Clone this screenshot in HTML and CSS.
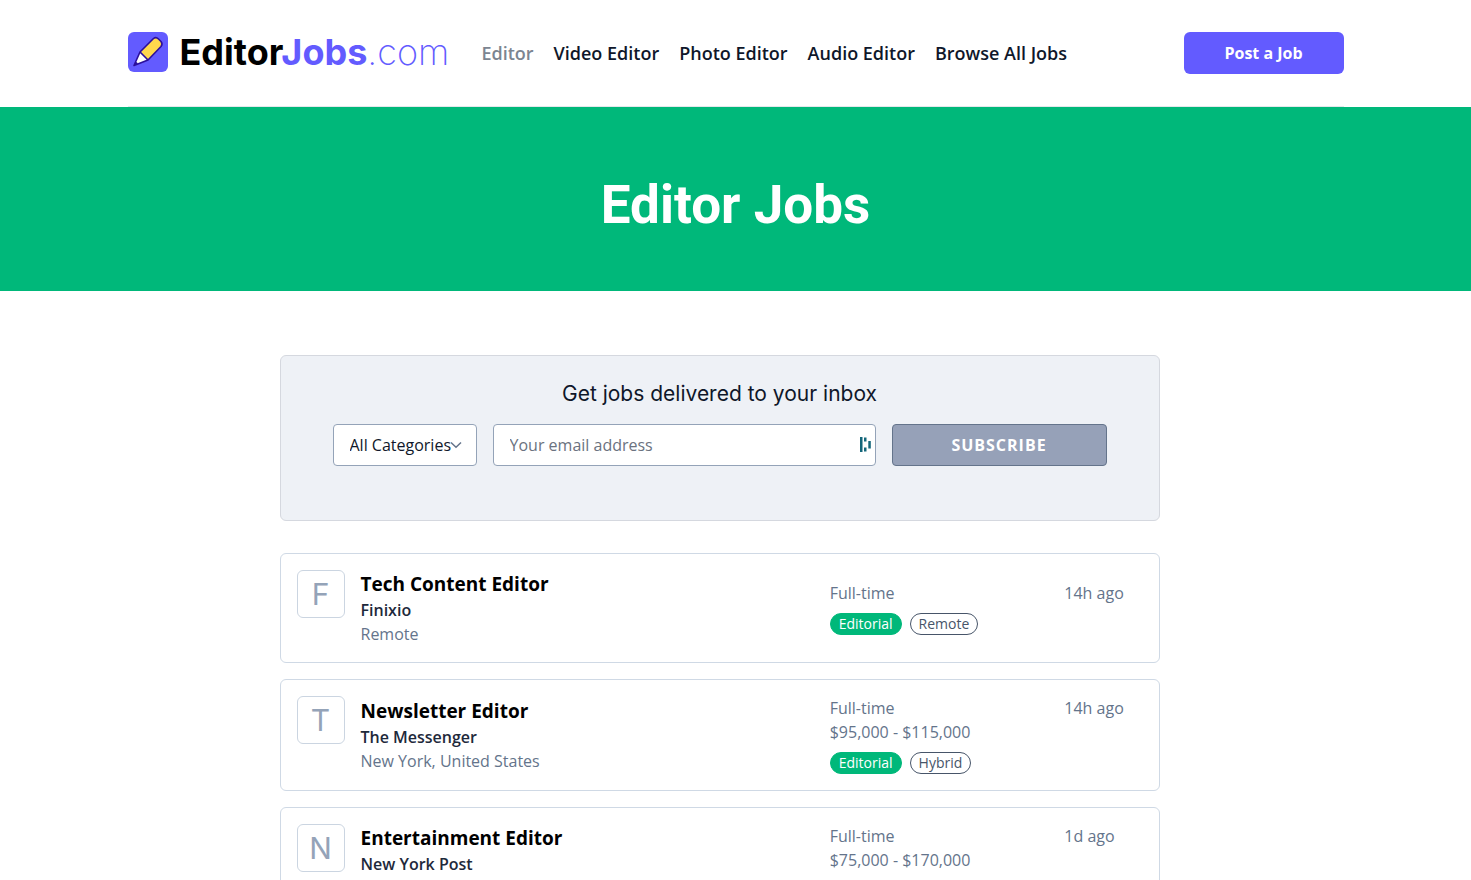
FILE: index.html
```html
<!DOCTYPE html>
<html lang="en">
<head>
<meta charset="utf-8">
<meta name="viewport" content="width=device-width, initial-scale=1">
<title>Editor Jobs</title>
<link rel="stylesheet" href="styles.css">
</head>
<body>
<header class="container">
  <div class="header-bar">
    <a class="logo" href="#">
      <svg class="logo-mark" viewBox="0 0 40 40" aria-hidden="true">
        <rect width="40" height="40" rx="6" fill="#635bff"/>
        <path d="M12.500 19.500 25.500 6.500q2.500-2 5 .500l2.500 2.500q2 2.500 0 5L20 28Z" fill="#ffd84d"/>
        <path d="M12 20 6 33.500 20 28Z" fill="#fff"/>
        <path d="M12 20 25.500 6.500q2.500-2 5 .500l2.500 2.500q2 2.500 0 5L20 28 6 33.500ZM12 20 20 28M6 33.500 9 30.500" fill="none" stroke="#2b0f9c" stroke-width="1.600" stroke-linejoin="round"/>
      </svg>
      <span class="logo-text">Editor<span class="logo-jobs">Jobs</span><span class="logo-com">.com</span></span>
    </a>
    <nav class="nav">
      <a class="current" href="#">Editor</a>
      <a href="#">Video Editor</a>
      <a href="#">Photo Editor</a>
      <a href="#">Audio Editor</a>
      <a href="#">Browse All Jobs</a>
    </nav>
    <button class="post-job" type="button">Post a Job</button>
  </div>
</header>

<section class="hero"><h1>Editor Jobs</h1></section>

<main class="main">
  <section class="signup">
    <h2>Get jobs delivered to your inbox</h2>
    <form class="signup-form">
      <div class="select-wrap">
        <select aria-label="Category"><option>All Categories</option></select>
        <svg class="chevron" viewBox="0 0 12 8" aria-hidden="true"><path d="M1 1.500 6 6.300l5-4.800" fill="none" stroke="#64748b" stroke-width="1.500"/></svg>
      </div>
      <div class="email-wrap">
        <input type="email" aria-label="Email address" placeholder="Your email address">
        <svg class="autofill" viewBox="0 0 11 15" aria-hidden="true"><path d="M0 0h2.500v15H0ZM4 .500h2.500v4H4ZM4 10.500h2.500v4H4ZM8.300 4h2.500v7.500H8.300Z" fill="#15677b"/></svg>
      </div>
      <button class="subscribe" type="submit">SUBSCRIBE</button>
    </form>
  </section>

  <div class="jobs">
    <article class="job">
      <div class="job-logo">F</div>
      <div class="job-body">
        <div class="job-info">
          <h3><a href="#">Tech Content Editor</a></h3>
          <p class="company">Finixio</p>
          <p>Remote</p>
        </div>
        <div class="job-meta">
          <div class="job-terms">
            <p>Full-time</p>
            <div class="tags"><a class="tag filled" href="#">Editorial</a><a class="tag" href="#">Remote</a></div>
          </div>
          <p>14h ago</p>
        </div>
      </div>
    </article>
    <article class="job">
      <div class="job-logo">T</div>
      <div class="job-body">
        <div class="job-info">
          <h3><a href="#">Newsletter Editor</a></h3>
          <p class="company">The Messenger</p>
          <p>New York, United States</p>
        </div>
        <div class="job-meta">
          <div class="job-terms">
            <p>Full-time</p>
            <p>$95,000 - $115,000</p>
            <div class="tags"><a class="tag filled" href="#">Editorial</a><a class="tag" href="#">Hybrid</a></div>
          </div>
          <p>14h ago</p>
        </div>
      </div>
    </article>
    <article class="job">
      <div class="job-logo">N</div>
      <div class="job-body">
        <div class="job-info">
          <h3><a href="#">Entertainment Editor</a></h3>
          <p class="company">New York Post</p>
        </div>
        <div class="job-meta">
          <div class="job-terms">
            <p>Full-time</p>
            <p>$75,000 - $170,000</p>
          </div>
          <p>1d ago</p>
        </div>
      </div>
    </article>
  </div>
</main>
</body>
</html>
```

FILE: styles.css
```css
* { box-sizing: border-box; }

body {
  margin: 0;
  background: #fff;
  color: #64748b;
  font: 16px/24px "Open Sans", "Noto Sans", sans-serif;
}

h1, h2, h3, p { margin: 0; }
a { color: inherit; text-decoration: none; }
button, input, select { font: inherit; }
button { cursor: pointer; }

.container {
  max-width: 1280px;
  margin: 0 auto;
  padding: 0 32px;
}

.header-bar {
  display: flex;
  align-items: center;
  gap: 32px;
  padding: 32px 0;
  border-bottom: 1px solid #e5e7eb;
}

.logo {
  display: flex;
  align-items: flex-start;
  gap: 12px;
  height: 42px;
}
.logo-mark { width: 40px; height: 40px; }
.logo-text {
  color: #000;
  font: 700 36px/40px Inter, "Liberation Sans", sans-serif;
  white-space: nowrap;
}
.logo-jobs { color: #635bff; }
.logo-com { color: #635bff; font-weight: 200; }

.nav {
  display: flex;
  gap: 20px;
  color: #0f172a;
  font-size: 18px;
  font-weight: 600;
  white-space: nowrap;
}
.nav .current { color: #7c8591; }

.post-job {
  width: 160px;
  height: 42px;
  margin-left: auto;
  padding: 0;
  border: 0;
  border-radius: 6px;
  background: #635bff;
  color: #fff;
  font-weight: 700;
}

.hero {
  padding: 70px 32px 58px;
  background: #00b87a;
  color: #fff;
  text-align: center;
}
.hero h1 { font: 700 53px/56px Roboto, "Liberation Sans", sans-serif; }

.main {
  max-width: 912px;
  margin: 0 auto;
  padding: 64px 32px 64px 0;
}

.signup {
  padding: 24px 52px 54px;
  border: 1px solid #d5d8df;
  border-radius: 6px;
  background: #eef1f6;
}
.signup h2 {
  color: #0f172a;
  font: 400 21px/28px Inter, "Liberation Sans", sans-serif;
  text-align: center;
}
.signup-form {
  display: flex;
  gap: 16px;
  margin-top: 16px;
}
.select-wrap, .email-wrap { position: relative; }
.select-wrap { flex: 0 0 144px; }
.email-wrap { flex: 1; }

select, input {
  display: block;
  width: 100%;
  height: 42px;
  padding: 0 0 0 16px;
  border: 1px solid #94a3b8;
  border-radius: 4px;
  background: #fff;
  color: #0f172a;
  appearance: none;
}
input::placeholder { color: #6b7280; opacity: 1; }

.chevron {
  position: absolute;
  top: 17px;
  right: 15px;
  width: 12px;
  height: 8px;
  pointer-events: none;
}
.autofill {
  position: absolute;
  top: 13px;
  right: 5px;
  width: 11px;
  height: 15px;
}

.subscribe {
  flex: 0 0 215px;
  height: 42px;
  border: 1px solid #64748b;
  border-radius: 4px;
  background: #96a1b8;
  color: #fff;
  font-weight: 700;
  letter-spacing: 1px;
}

.jobs {
  display: grid;
  gap: 16px;
  margin-top: 32px;
}
.job {
  display: flex;
  gap: 16px;
  padding: 16px;
  border: 1px solid #cfd9e5;
  border-radius: 6px;
}
.job-logo {
  flex: none;
  width: 48px;
  height: 48px;
  border: 1px solid #cbd5e1;
  border-radius: 6px;
  color: #94a3b8;
  font: 400 30px/46px Inter, "Liberation Sans", sans-serif;
  text-align: center;
}
.job-body {
  display: grid;
  flex: 1;
  grid-template-columns: 3fr 2fr;
  align-items: center;
}
.job-info {
  min-height: 76px;
}
.job-info h3 {
  color: #000;
  font-size: 19px;
  font-weight: 700;
  line-height: 28px;
}
.job-info .company { color: #1e293b; font-weight: 600; }
.job-meta {
  display: grid;
  grid-template-columns: 3fr 1fr;
  white-space: nowrap;
}
.job:last-child .job-body { align-items: start; }
.tags {
  display: flex;
  gap: 8px;
  margin-top: 8px;
}
.tag {
  padding: 0 8px;
  border: 1px solid #475569;
  border-radius: 11px;
  color: #475569;
  font-size: 14px;
  line-height: 20px;
}
.tag.filled {
  border-color: #00b87a;
  background: #00b87a;
  color: #fff;
}
```
